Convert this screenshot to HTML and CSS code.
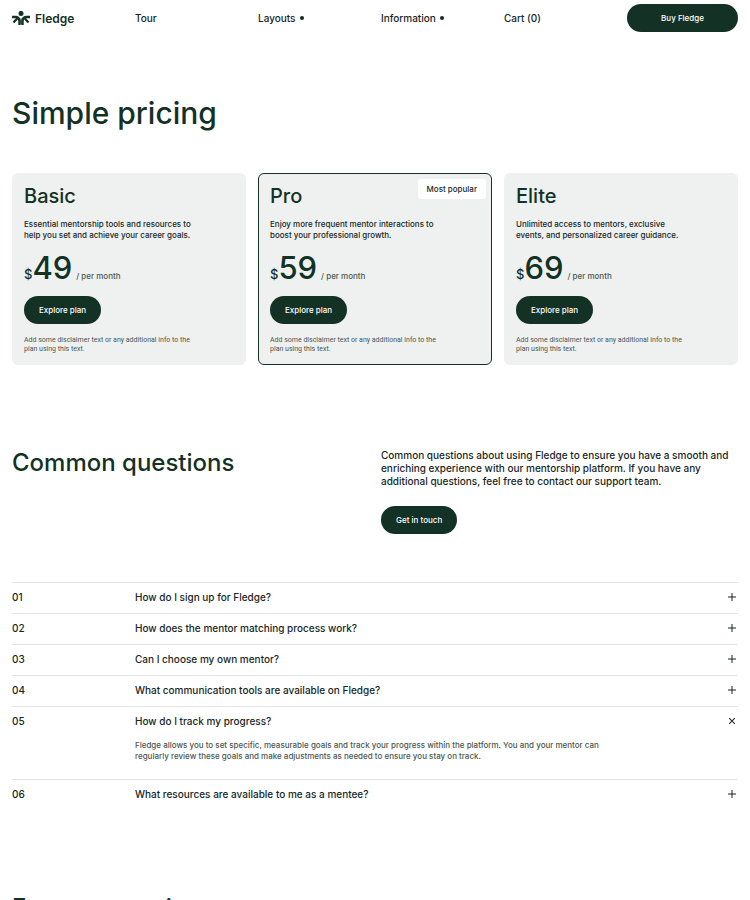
FILE: index.html
```html
<!DOCTYPE html>
<html lang="en">
<head>
<meta charset="utf-8">
<meta name="viewport" content="width=device-width, initial-scale=1">
<title>Fledge – Pricing</title>
<link rel="stylesheet" href="styles.css">
</head>
<body>
<header class="header grid">
  <a class="logo" href="#">
    <svg class="logo-mark" viewBox="0 0 18 14" aria-hidden="true">
      <circle class="head" cx="9" cy="2.4" r="2.5"/>
      <path class="body" d="M0 6H4Q7.4 6.4 7.5 10.4V14M18 6H14Q10.6 6.4 10.5 10.4V14"/>
      <path class="core" d="M9 7.5V13"/>
      <path class="limb" d="M5.4 7.2L1.5 11.6M12.6 7.2L16.5 11.6"/>
    </svg>
    <span>Fledge</span>
  </a>
  <nav class="nav" aria-label="Main">
    <a href="#">Tour</a>
    <a class="has-menu" href="#">Layouts</a>
    <a class="has-menu" href="#">Information</a>
    <a href="#">Cart (0)</a>
  </nav>
  <a class="button" href="#">Buy Fledge</a>
</header>

<main>
  <section class="pricing">
    <h1>Simple pricing</h1>
    <div class="plans">
      <article class="plan">
        <h2 class="plan-name">Basic</h2>
        <p class="plan-text">Essential mentorship tools and resources to help you set and achieve your career goals.</p>
        <p class="price"><span class="currency">$</span><span class="amount">49</span><span class="period">/ per month</span></p>
        <a class="button" href="#">Explore plan</a>
        <p class="note">Add some disclaimer text or any additional info to the plan using this text.</p>
      </article>
      <article class="plan featured">
        <span class="badge">Most popular</span>
        <h2 class="plan-name">Pro</h2>
        <p class="plan-text">Enjoy more frequent mentor interactions to boost your professional growth.</p>
        <p class="price"><span class="currency">$</span><span class="amount">59</span><span class="period">/ per month</span></p>
        <a class="button" href="#">Explore plan</a>
        <p class="note">Add some disclaimer text or any additional info to the plan using this text.</p>
      </article>
      <article class="plan">
        <h2 class="plan-name">Elite</h2>
        <p class="plan-text">Unlimited access to mentors, exclusive events, and personalized career guidance.</p>
        <p class="price"><span class="currency">$</span><span class="amount">69</span><span class="period">/ per month</span></p>
        <a class="button" href="#">Explore plan</a>
        <p class="note">Add some disclaimer text or any additional info to the plan using this text.</p>
      </article>
    </div>
  </section>

  <section class="questions">
    <div class="intro">
      <h2>Common questions</h2>
      <div>
        <p>Common questions about using Fledge to ensure you have a smooth and enriching experience with our mentorship platform. If you have any additional questions, feel free to contact our support team.</p>
        <a class="button" href="#">Get in touch</a>
      </div>
    </div>
    <div class="faq">
      <details>
        <summary class="grid"><span>01</span><span class="question">How do I sign up for Fledge?</span><svg class="toggle" viewBox="0 0 8 8" aria-hidden="true"><path d="M4 0V8M0 4H8"/></svg></summary>
      </details>
      <details>
        <summary class="grid"><span>02</span><span class="question">How does the mentor matching process work?</span><svg class="toggle" viewBox="0 0 8 8" aria-hidden="true"><path d="M4 0V8M0 4H8"/></svg></summary>
      </details>
      <details>
        <summary class="grid"><span>03</span><span class="question">Can I choose my own mentor?</span><svg class="toggle" viewBox="0 0 8 8" aria-hidden="true"><path d="M4 0V8M0 4H8"/></svg></summary>
      </details>
      <details>
        <summary class="grid"><span>04</span><span class="question">What communication tools are available on Fledge?</span><svg class="toggle" viewBox="0 0 8 8" aria-hidden="true"><path d="M4 0V8M0 4H8"/></svg></summary>
      </details>
      <details open>
        <summary class="grid"><span>05</span><span class="question">How do I track my progress?</span><svg class="toggle" viewBox="0 0 8 8" aria-hidden="true"><path d="M4 0V8M0 4H8"/></svg></summary>
        <p class="answer">Fledge allows you to set specific, measurable goals and track your progress within the platform. You and your mentor can regularly review these goals and make adjustments as needed to ensure you stay on track.</p>
      </details>
      <details>
        <summary class="grid"><span>06</span><span class="question">What resources are available to me as a mentee?</span><svg class="toggle" viewBox="0 0 8 8" aria-hidden="true"><path d="M4 0V8M0 4H8"/></svg></summary>
      </details>
    </div>
  </section>

  <section class="more">
    <h2>Every mentoring</h2>
  </section>
</main>
</body>
</html>
```
FILE: styles.css
```css
:root {
  --green: #143126;
  --ink: #17271f;
  --muted: #4b5751;
  --panel: #eef1f0;
  --line: #e3e6e5;
}

* { box-sizing: border-box; }

body {
  margin: 0;
  color: var(--ink);
  background: #fff;
  font: 500 10px/13px Inter, "Liberation Sans", sans-serif;
}

h1, h2, p { margin: 0; }
a { color: inherit; text-decoration: none; }

h1, h2 {
  color: var(--green);
  font-weight: 500;
}

h1 { font-size: 30px; line-height: 36px; }
h2 { font-size: 24px; line-height: 28px; }

.grid {
  display: grid;
  grid-template-columns: repeat(6, 1fr);
  column-gap: 12px;
  align-items: center;
}

.header { padding: 4px 12px 6px; }

.logo {
  display: flex;
  align-items: center;
  gap: 5px;
  color: var(--green);
  font-size: 12px;
  font-weight: 600;
}

.logo-mark {
  width: 18px;
  height: 14px;
  fill: none;
  stroke: currentColor;
}

.logo-mark .head { fill: currentColor; stroke: none; }
.logo-mark .body { stroke-width: 2.4; }
.logo-mark .core { stroke-width: 1; }
.logo-mark .limb { stroke-width: 2.2; }

.nav {
  grid-column: 2 / 6;
  display: grid;
  grid-template-columns: repeat(4, 1fr);
  column-gap: 12px;
}

.has-menu {
  display: flex;
  align-items: center;
  gap: 4px;
}

.has-menu::after {
  content: "";
  width: 4px;
  height: 4px;
  border-radius: 50%;
  background: currentColor;
}

.button {
  display: inline-flex;
  align-items: center;
  justify-content: center;
  height: 28px;
  padding: 0 15px;
  border-radius: 14px;
  color: #fff;
  background: var(--green);
  font-size: 8px;
}

.pricing { padding: 57px 12px 0; }

.plans {
  display: grid;
  grid-template-columns: repeat(3, 1fr);
  gap: 12px;
  margin-top: 42px;
}

.plan {
  position: relative;
  display: flex;
  flex-direction: column;
  align-items: flex-start;
  padding: 11px 11px 10px;
  border: 1px solid transparent;
  border-radius: 6px;
  background: var(--panel);
}

.featured { border-color: var(--green); }

.badge {
  position: absolute;
  top: 5px;
  right: 5px;
  padding: 4px 9px;
  border-radius: 3px;
  background: #fff;
  font-size: 8px;
  line-height: 12px;
}

.plan-name { font-size: 20px; line-height: 22px; }

.plan-text {
  max-width: 170px;
  margin-top: 12px;
  font-size: 8px;
  line-height: 11px;
}

.price {
  display: flex;
  align-items: baseline;
  margin: 11px 0 12px;
  color: var(--green);
  line-height: 12px;
}

.currency { font-size: 13px; }

.amount {
  font-size: 31px;
  line-height: 32px;
}

.period {
  margin-left: 4px;
  color: var(--muted);
  font-size: 8px;
}

.note {
  max-width: 170px;
  margin-top: 12px;
  color: var(--muted);
  font-family: Roboto, Inter, sans-serif;
  font-size: 7px;
  font-weight: 400;
  line-height: 9px;
}

.questions { padding: 84px 12px 0; }

.intro {
  display: grid;
  grid-template-columns: repeat(2, 1fr);
  gap: 12px;
}

.intro .button { margin-top: 18px; }

.faq { margin-top: 48px; }
.faq details { border-top: 1px solid var(--line); }

.faq summary {
  height: 30px;
  padding-bottom: 2px;
  list-style: none;
  cursor: pointer;
}

.question { grid-column: 2 / 6; }

.toggle {
  justify-self: end;
  width: 8px;
  height: 8px;
  margin-right: 2px;
  overflow: visible;
  fill: none;
  stroke: var(--ink);
  stroke-width: 1;
}

details[open] .toggle { transform: rotate(45deg); }

.answer {
  margin-left: calc((100% + 12px) / 6);
  max-width: 480px;
  padding: 3px 0 17px;
  color: var(--muted);
  font-size: 8px;
  line-height: 11px;
}

.more { padding: 84px 12px 0; }
```
